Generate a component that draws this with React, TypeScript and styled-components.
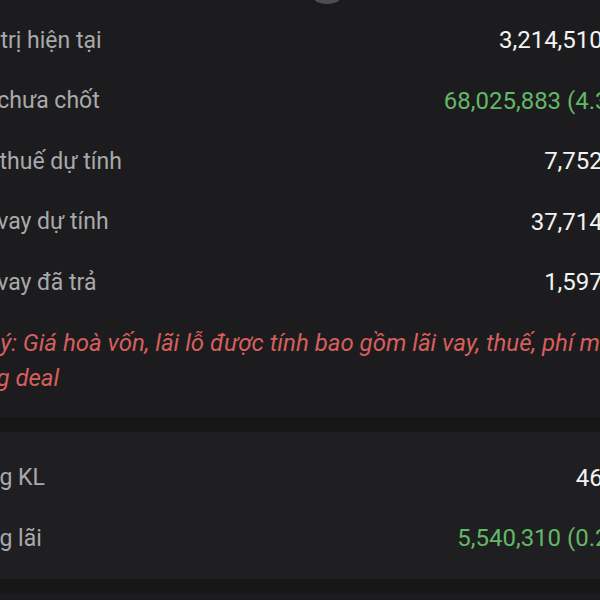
import React from 'react';
import styled, { createGlobalStyle } from 'styled-components';

const GlobalStyle = createGlobalStyle`
  html, body {
    margin: 0;
    padding: 0;
    background: #1c1c1e;
    overflow: hidden;
  }
`;

const Viewport = styled.div`
  width: 600px;
  height: 600px;
  overflow: hidden;
  background: #1c1c1e;
  font-family: Roboto, "Noto Sans", sans-serif;
`;

const Sheet = styled.div`
  margin-left: -39px;
  width: 687px;
  display: flex;
  flex-direction: column;
`;

const HandleSlot = styled.div`
  height: 4px;
  overflow: hidden;
  display: flex;
  justify-content: center;
  padding-left: 45px;
`;

const Handle = styled.div`
  width: 26px;
  height: 12px;
  margin-top: -8px;
  border-radius: 50%;
  background: #4e4e50;
`;

const Section = styled.div<{ $tone?: 'top' | 'bottom' }>`
  display: flex;
  flex-direction: column;
  background: ${(p) => (p.$tone === 'bottom' ? '#1f1f21' : '#1c1c1e')};
  padding: ${(p) => (p.$tone === 'bottom' ? '16px 0 10px' : '6px 0 21px')};
`;

const Row = styled.div`
  height: 60.5px;
  display: flex;
  align-items: center;
  justify-content: space-between;
  white-space: nowrap;
`;

const Label = styled.span`
  font-size: 23px;
  color: #a9a9ab;
`;

const Value = styled.span<{ $up?: boolean }>`
  font-size: 24px;
  color: ${(p) => (p.$up ? '#62b866' : '#f3f3f3')};
`;

const Note = styled.p`
  margin: 13px 0 0 -6px;
  font-size: 24px;
  line-height: 35px;
  font-style: italic;
  color: #d65f5c;
  white-space: nowrap;
`;

const Band = styled.div`
  height: 15px;
  background: #171717;
`;

type Item = { label: string; value: string; up?: boolean };

const summary: Item[] = [
  { label: 'Giá trị hiện tại', value: '3,214,510,400' },
  { label: 'Lãi chưa chốt', value: '68,025,883 (4.39%)', up: true },
  { label: 'Phí thuế dự tính', value: '7,752,590' },
  { label: 'Lãi vay dự tính', value: '37,714,260' },
  { label: 'Lãi vay đã trả', value: '1,597,830' },
];

const totals: Item[] = [
  { label: 'Tổng KL', value: '46,000' },
  { label: 'Tổng lãi', value: '5,540,310 (0.28%)', up: true },
];

const Rows = ({ items }: { items: Item[] }) => (
  <>
    {items.map((it) => (
      <Row key={it.label}>
        <Label>{it.label}</Label>
        <Value $up={it.up}>{it.value}</Value>
      </Row>
    ))}
  </>
);

export default function App() {
  return (
    <Viewport>
      <GlobalStyle />
      <Sheet>
        <HandleSlot>
          <Handle />
        </HandleSlot>
        <Section $tone="top">
          <Rows items={summary} />
          <Note>
            Lưu ý: Giá hoà vốn, lãi lỗ được tính bao gồm lãi vay, thuế, phí mua bán
            <br />
            trong deal
          </Note>
        </Section>
        <Band />
        <Section $tone="bottom">
          <Rows items={totals} />
        </Section>
        <Band />
      </Sheet>
    </Viewport>
  );
}
